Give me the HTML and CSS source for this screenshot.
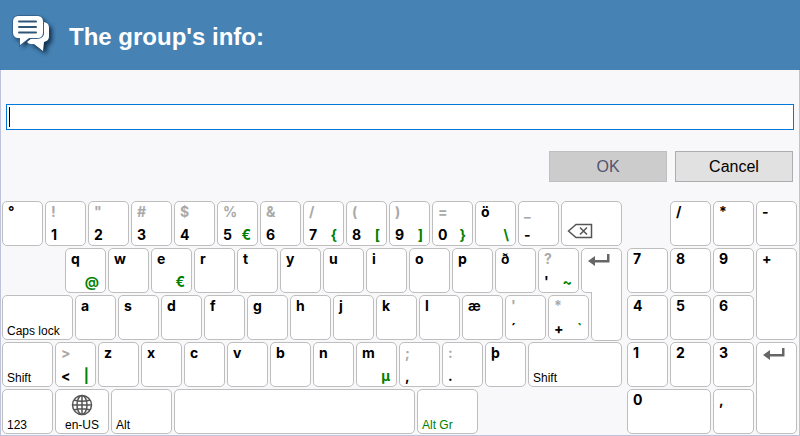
FILE: index.html
```html
<!DOCTYPE html>
<html lang="en">
<head>
    <meta charset="UTF-8">
    <meta name="viewport" content="width=device-width, initial-scale=1.0">
    <title>The group's info</title>
    <link rel="stylesheet" href="styles.css">
</head>
<body>
    <header class="header">
        <svg class="logo" viewBox="0 0 48 48" width="48" height="48" aria-hidden="true">
            <g class="logo-shadow">
                <path d="M35 11c4 0 6 2 6 6v8c0 3-1 5-4 6l-2 9-9-6-6-3 8-4c5 0 7-2 7-6z"/>
                <path d="M11 5h18c4 0 6 2 6 6v10c0 4-2 6-6 6h-9l-8 7v-7h-1c-4 0-6-2-6-6V11c0-4 2-6 6-6z"/>
            </g>
            <path class="logo-fill" d="M36 11c4 1 5 3 5 6v8c0 3-1 5-5 6l-1 9-9-7h-3c-2 0-3-1-4-2l5-4h5c5 0 7-2 7-6z"/>
            <path class="logo-fill" d="M11 5h18c4 0 6 2 6 6v10c0 4-2 6-6 6h-8l-9 7v-7h-1c-4 0-6-2-6-6V11c0-4 2-6 6-6z"/>
            <path class="logo-lines" d="M11 10.500h17M11 16h17M11 21.500h17"/>
        </svg>
        <h1>The group's info:</h1>
    </header>

    <main class="dialog">
        <form class="form">
            <div class="text-field">
                <input type="text" id="info" aria-label="The group's info">
            </div>
            <div class="actions">
                <button type="button" disabled>OK</button>
                <button type="button">Cancel</button>
            </div>
        </form>

        <div class="keyboard">
            <div class="keys">
                <div class="row">
                    <button class="key"><span>°</span></button>
                    <button class="key"><span class="alt">!</span><span>1</span></button>
                    <button class="key"><span class="alt">"</span><span>2</span></button>
                    <button class="key"><span class="alt">#</span><span>3</span></button>
                    <button class="key"><span class="alt">$</span><span>4</span></button>
                    <button class="key"><span class="alt">%</span><span>5</span><span class="gr">€</span></button>
                    <button class="key"><span class="alt">&amp;</span><span>6</span></button>
                    <button class="key"><span class="alt">/</span><span>7</span><span class="gr">{</span></button>
                    <button class="key"><span class="alt">(</span><span>8</span><span class="gr">[</span></button>
                    <button class="key"><span class="alt">)</span><span>9</span><span class="gr">]</span></button>
                    <button class="key"><span class="alt">=</span><span>0</span><span class="gr">}</span></button>
                    <button class="key"><span>ö</span><span class="gr">\</span></button>
                    <button class="key"><span class="alt">_</span><span>-</span></button>
                    <button class="key w61 backspace" aria-label="Backspace">
                        <svg class="icon" viewBox="0 0 26 16" width="26" height="16">
                            <path d="M1.500 8 9 1.500h15.500v13H9zM13 4.500l7 7M20 4.500l-7 7"/>
                        </svg>
                    </button>
                </div>
                <div class="row">
                    <div class="w61"></div>
                    <button class="key"><span>q</span><span class="gr">@</span></button>
                    <button class="key"><span>w</span></button>
                    <button class="key"><span>e</span><span class="gr">€</span></button>
                    <button class="key"><span>r</span></button>
                    <button class="key"><span>t</span></button>
                    <button class="key"><span>y</span></button>
                    <button class="key"><span>u</span></button>
                    <button class="key"><span>i</span></button>
                    <button class="key"><span>o</span></button>
                    <button class="key"><span>p</span></button>
                    <button class="key"><span>ð</span></button>
                    <button class="key"><span class="alt">?</span><span>'</span><span class="gr">~</span></button>
                    <button class="key enter" aria-label="Enter">
                        <svg class="icon-solid" viewBox="0 0 22 12" width="22" height="12">
                            <path d="M0 7l7-5v4h12V0h2.500v8.500H7v3.500z"/>
                        </svg>
                    </button>
                </div>
                <div class="row">
                    <button class="key w71 label"><span>Caps lock</span></button>
                    <button class="key"><span>a</span></button>
                    <button class="key"><span>s</span></button>
                    <button class="key"><span>d</span></button>
                    <button class="key"><span>f</span></button>
                    <button class="key"><span>g</span></button>
                    <button class="key"><span>h</span></button>
                    <button class="key"><span>j</span></button>
                    <button class="key"><span>k</span></button>
                    <button class="key"><span>l</span></button>
                    <button class="key"><span>æ</span></button>
                    <button class="key"><span class="alt">'</span><span>´</span></button>
                    <button class="key"><span class="alt">*</span><span>+</span><span class="gr">`</span></button>
                    <div class="w31"></div>
                </div>
                <div class="row">
                    <button class="key w51 label"><span>Shift</span></button>
                    <button class="key"><span class="alt">&gt;</span><span>&lt;</span><span class="gr">|</span></button>
                    <button class="key"><span>z</span></button>
                    <button class="key"><span>x</span></button>
                    <button class="key"><span>c</span></button>
                    <button class="key"><span>v</span></button>
                    <button class="key"><span>b</span></button>
                    <button class="key"><span>n</span></button>
                    <button class="key"><span>m</span><span class="gr">µ</span></button>
                    <button class="key"><span class="alt">;</span><span>,</span></button>
                    <button class="key"><span class="alt">:</span><span>.</span></button>
                    <button class="key"><span>þ</span></button>
                    <button class="key w94 label"><span>Shift</span></button>
                </div>
                <div class="row">
                    <button class="key w51 label"><span>123</span></button>
                    <button class="key w54 label language">
                        <svg class="icon" viewBox="0 0 22 22" width="22" height="22" aria-hidden="true">
                            <circle cx="11" cy="11" r="9.500"/>
                            <ellipse cx="11" cy="11" rx="5" ry="9.500"/>
                            <path d="M11 1.500v19M1.500 11h19M3 6q8 2.500 16 0M3 16q8-2.500 16 0"/>
                        </svg>
                        <span>en-US</span>
                    </button>
                    <button class="key w61 label"><span>Alt</span></button>
                    <button class="key w241" aria-label="Space"></button>
                    <button class="key w61 label alt-gr"><span>Alt Gr</span></button>
                    <div class="w142"></div>
                </div>
            </div>

            <div class="numpad">
                <button class="key divide"><span>/</span></button>
                <button class="key"><span>*</span></button>
                <button class="key"><span>-</span></button>
                <button class="key"><span>7</span></button>
                <button class="key"><span>8</span></button>
                <button class="key"><span>9</span></button>
                <button class="key tall"><span>+</span></button>
                <button class="key"><span>4</span></button>
                <button class="key"><span>5</span></button>
                <button class="key"><span>6</span></button>
                <button class="key"><span>1</span></button>
                <button class="key"><span>2</span></button>
                <button class="key"><span>3</span></button>
                <button class="key tall" aria-label="Enter">
                    <svg class="icon-solid" viewBox="0 0 22 12" width="22" height="12">
                        <path d="M0 7l7-5v4h12V0h2.500v8.500H7v3.500z"/>
                    </svg>
                </button>
                <button class="key wide"><span>0</span></button>
                <button class="key"><span>,</span></button>
            </div>
        </div>
    </main>
</body>
</html>
```

FILE: styles.css
```css
* {
    box-sizing: border-box;
}
body {
    margin: 0;
    background: #f8f8fb;
    font-family: "Liberation Sans", Arial, sans-serif;
}
.header {
    display: flex;
    align-items: center;
    gap: 13px;
    height: 70px;
    padding: 0 8px;
    background: #4682b4;
    color: #fff;
}
.header h1 {
    margin: 4px 0 0;
    font-size: 24px;
    line-height: 28px;
}
.logo-fill {
    fill: #fff;
}
.logo-fill:nth-of-type(2) {
    stroke: #35658e;
    stroke-width: 2;
    paint-order: stroke;
}
.logo-shadow {
    fill: #12324f;
    filter: blur(2px);
    transform: translate(3px, 3px);
}
.logo-lines {
    fill: none;
    stroke: #2f5878;
    stroke-width: 2;
    stroke-linecap: round;
}
.dialog {
    border: 1px solid #bfc2dc;
    border-top: 0;
    padding-bottom: 1px;
}

/* Text box and buttons */
.form {
    padding: 34px 5px 19px;
}
.text-field {
    position: relative;
}
.text-field input {
    display: block;
    width: 100%;
    height: 26px;
    padding: 2px 3px;
    border: 1px solid #0078d7;
    background: #fff;
    font: 16px "Liberation Sans", Arial, sans-serif;
    outline: none;
}
.text-field::after {
    content: "";
    position: absolute;
    left: 3px;
    top: 3px;
    width: 1px;
    height: 20px;
    background: #000;
}
.actions {
    display: flex;
    justify-content: flex-end;
    gap: 8px;
    margin-top: 21px;
    padding-right: 1px;
}
.actions button {
    width: 118px;
    height: 31px;
    padding: 0;
    border: 1px solid #adadad;
    background: #e1e1e1;
    color: #000;
    font: 16px "Liberation Sans", Arial, sans-serif;
}
.actions button:disabled {
    border-color: #bfbfbf;
    background: #ccc;
    color: #53536f;
}

/* Keyboard */
.keyboard {
    display: flex;
    gap: 5px;
    padding: 0 2px 0 1px;
}
.keys {
    flex: 620 1 0;
    display: flex;
    flex-direction: column;
    gap: 2px;
}
.row {
    display: flex;
    gap: 2px;
}
.numpad {
    flex: 170 1 0;
    display: grid;
    grid-template-columns: repeat(4, 1fr);
    grid-auto-rows: 45px;
    gap: 2px;
}
.key {
    display: grid;
    grid-template-columns: auto auto;
    grid-template-rows: 16px 16px;
    align-content: space-between;
    justify-content: space-between;
    flex: 41 1 41px;
    min-width: 0;
    height: 45px;
    padding: 2px 6px 2px 5px;
    border: 1px solid #bebebe;
    border-radius: 5px;
    background: #fff;
    color: #000;
    font: bold 14px/16px Inter, Arial, sans-serif;
    text-align: left;
    white-space: nowrap;
}
.key span:first-child {
    grid-area: 1 / 1;
}
.key .alt {
    color: #a9a9a9;
}
.key .alt + span {
    grid-area: 2 / 1;
}
.key .gr {
    grid-area: 2 / 2;
    color: #008000;
}
.numpad .key {
    height: auto;
}
.numpad .divide {
    grid-column: 2;
}
.numpad .tall {
    grid-column: 4;
    grid-row: span 2;
}
.numpad .wide {
    grid-column: span 2;
}
.key.label {
    display: flex;
    flex-direction: column;
    justify-content: flex-end;
    align-items: flex-start;
    padding: 0 4px;
    font: 12px/16px "Liberation Sans", Arial, sans-serif;
}
.key.language {
    align-items: center;
    justify-content: space-between;
    padding-top: 4px;
}
.key.alt-gr {
    color: #008000;
}
.key.backspace {
    display: flex;
    justify-content: flex-start;
    align-items: flex-end;
    padding-bottom: 6px;
}
.icon {
    fill: none;
    stroke: #555;
    stroke-width: 1.5;
}
.icon-solid {
    fill: #666;
    margin: 3px 1px;
}

/* Lower half of the L-shaped enter key */
.enter {
    position: relative;
    border-bottom-right-radius: 0;
}
.enter::after {
    content: "";
    position: absolute;
    top: 43px;
    left: 9px;
    right: -1px;
    height: 48px;
    border: 1px solid #bebebe;
    border-top: 0;
    border-radius: 0 0 5px 5px;
    background: #fff;
}

/* Key widths, as shares of the row */
.w31 {
    flex: 31 1 31px;
}
.w51 {
    flex: 51 1 51px;
}
.w54 {
    flex: 54 1 54px;
}
.w61 {
    flex: 61 1 61px;
}
.w71 {
    flex: 71 1 71px;
}
.w94 {
    flex: 94 1 94px;
}
.w142 {
    flex: 142 1 142px;
}
.w241 {
    flex: 241 1 241px;
}
```
